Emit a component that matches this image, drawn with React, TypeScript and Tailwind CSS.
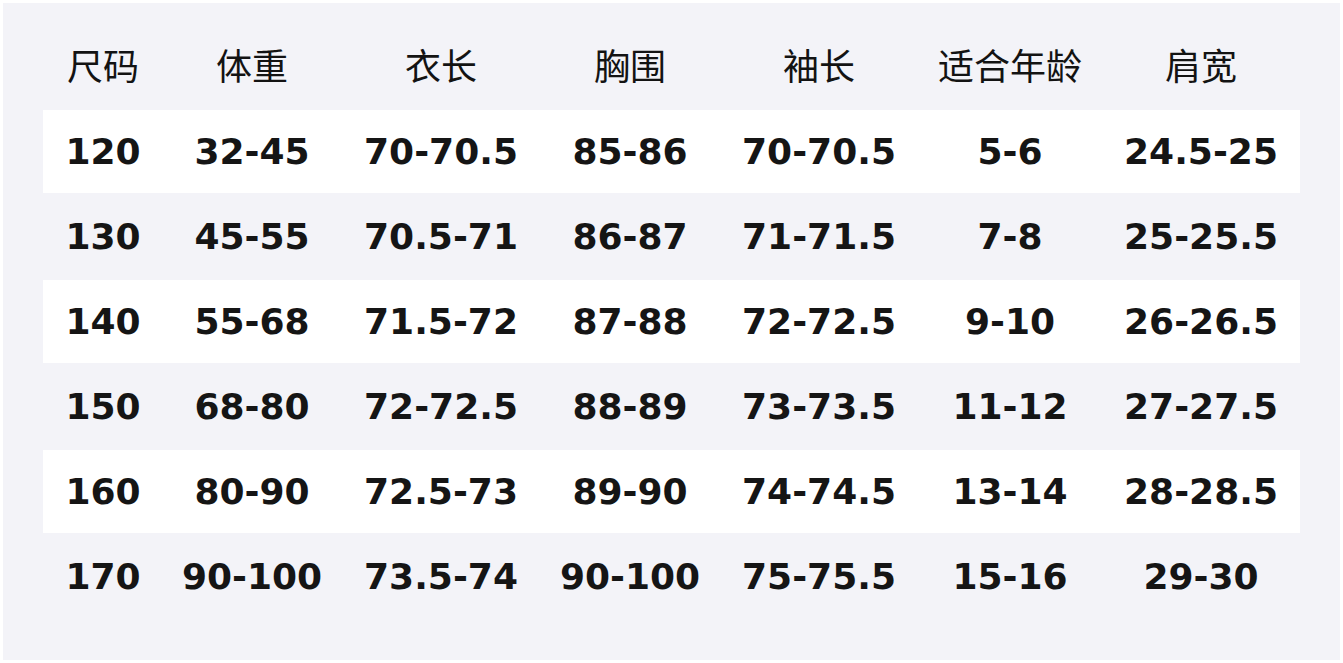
const headers = ['尺码', '体重', '衣长', '胸围', '袖长', '适合年龄', '肩宽'];

const rows = [
  ['120', '32-45', '70-70.5', '85-86', '70-70.5', '5-6', '24.5-25'],
  ['130', '45-55', '70.5-71', '86-87', '71-71.5', '7-8', '25-25.5'],
  ['140', '55-68', '71.5-72', '87-88', '72-72.5', '9-10', '26-26.5'],
  ['150', '68-80', '72-72.5', '88-89', '73-73.5', '11-12', '27-27.5'],
  ['160', '80-90', '72.5-73', '89-90', '74-74.5', '13-14', '28-28.5'],
  ['170', '90-100', '73.5-74', '90-100', '75-75.5', '15-16', '29-30'],
];

const cols = 'grid grid-cols-[120px_178px_200px_178px_200px_182px_200px]';

export default function App() {
  return (
    <div className="w-[1343px] h-[663px] bg-white p-[3px]">
      <div className="h-[657px] w-[1337px] bg-[#f3f3f8] px-[40px]">
        <div
          className={`${cols} h-[107px] pt-[14px] items-center text-[36px] leading-none text-[#131313]`}
          style={{ fontFamily: '"Noto Sans CJK SC", "Noto Sans", sans-serif' }}
        >
          {headers.map(h => (
            <div key={h} className="text-center">{h}</div>
          ))}
        </div>
        {rows.map((r, i) => (
          <div
            key={r[0]}
            className={`${cols} items-center text-[36px] font-bold leading-none text-[#151515] ${
              i % 2 === 0 ? 'h-[83px] bg-white' : 'h-[87px]'
            }`}
            style={{ fontFamily: '"DejaVu Sans", Verdana, sans-serif' }}
          >
            {r.map((c, j) => (
              <div key={j} className="text-center">{c}</div>
            ))}
          </div>
        ))}
      </div>
    </div>
  );
}
